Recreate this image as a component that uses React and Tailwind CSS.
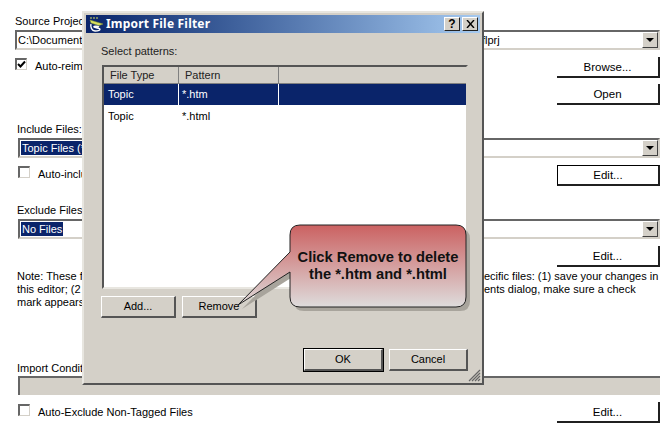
const font = "font-['Liberation_Sans',sans-serif]"

function PageButton({ label, focused }) {
  return (
    <div className={`w-[103px] h-[21px] pt-[2px] flex items-center justify-center bg-white text-[11.5px] text-black border-r-2 border-b-2 border-r-[#202020] border-b-[#202020] ${focused ? 'border-l border-t border-l-black border-t-black' : ''}`}>
      {label}
    </div>
  )
}

function Combo({ selected, left, right }) {
  return (
    <div className="h-[20px] flex items-center bg-white border-t-2 border-l-2 border-t-[#666] border-l-[#666] border-b-2 border-r-2 border-b-[#d4d0c8] border-r-[#d4d0c8]">
      <div className="flex-1 flex pl-[1px] leading-[14px]">
        {selected ? (
          <span className="bg-[#0a246a] text-white px-[1px] inline-block">{left}</span>
        ) : (
          <span className="w-[464px] shrink-0">{left}</span>
        )}
        {right && <span>{right}</span>}
      </div>
      <div className="w-[16px] h-[16px] bg-[#d4d0c8] flex items-center justify-center border-t border-l border-t-white border-l-white border-r border-b border-r-[#404040] border-b-[#404040]">
        <div className="w-0 h-0 border-l-[4px] border-r-[4px] border-t-[4px] border-l-transparent border-r-transparent border-t-black" />
      </div>
    </div>
  )
}

function Check({ checked }) {
  return (
    <div className="w-[12px] h-[12px] bg-white border-t-2 border-l-2 border-t-[#666] border-l-[#666] border-b border-r border-b-[#d4d0c8] border-r-[#d4d0c8] flex items-center justify-center">
      {checked && (
        <svg width="9" height="9" viewBox="0 0 9 9"><path d="M1 4l2.5 2.5L8 1.5" fill="none" stroke="#000" strokeWidth="2" /></svg>
      )}
    </div>
  )
}

function DlgButton({ label, wide, focused }) {
  return (
    <div className={`${wide ? 'w-[79px]' : 'w-[75px]'} h-[22px] flex items-center justify-center bg-[#d4d0c8] text-[11px] text-black border-t border-l border-t-white border-l-white border-r-2 border-b-2 border-r-[#555] border-b-[#555] ${focused ? 'outline outline-1 outline-black' : ''}`}>
      {label}
    </div>
  )
}

function Row({ cells, selected }) {
  return (
    <div className={`h-[21px] mb-[1px] flex items-center text-[11px] ${selected ? 'bg-[#0a246a] text-white' : 'text-black'}`}>
      <div className={`w-[75px] pl-[4px] h-full flex items-center ${selected ? 'border-r border-r-white' : ''}`}>{cells[0]}</div>
      <div className={`w-[100px] pl-[3px] h-full flex items-center ${selected ? 'border-r border-r-white' : ''}`}>{cells[1]}</div>
    </div>
  )
}

function Dialog() {
  return (
    <div className="absolute left-[82px] top-[11px] w-[402px] h-[374px] bg-[#d4d0c8] border-t-2 border-l-2 border-t-[#e8e6e0] border-l-[#e8e6e0] border-r-2 border-b-2 border-r-[#555] border-b-[#555] p-[2px] flex flex-col">
      {/* title bar */}
      <div className="h-[18px] flex items-center bg-gradient-to-r from-[#0a246a] to-[#a6caf0] pl-[2px] pr-[2px]">
        <svg width="17" height="17" viewBox="0 0 17 17" className="mr-[1px]">
          <path d="M3 1v2M6 1v2M9 1v2" stroke="#d8e060" strokeWidth="1" />
          <path d="M2 4l13 4-4 1.5L3 7z" fill="#d8e060" stroke="#8a9a30" strokeWidth="0.5" />
          <path d="M3 8c-1 3 1 7 4 7s5-1 5-2-5-1-6-2 4-1 5 0" fill="none" stroke="#fff" strokeWidth="1.4" />
        </svg>
        <span className="flex-1 text-white font-bold text-[12px] tracking-[0.2px] font-['Noto_Sans',sans-serif]">Import File Filter</span>
        <div className="w-[16px] h-[14px] mr-[2px] bg-[#d4d0c8] border-t border-l border-t-white border-l-white border-r border-b border-r-[#222] border-b-[#222] flex items-center justify-center text-[12px] font-bold leading-none text-black">?</div>
        <div className="w-[16px] h-[14px] bg-[#d4d0c8] border-t border-l border-t-white border-l-white border-r border-b border-r-[#222] border-b-[#222] flex items-center justify-center">
          <svg width="9" height="8" viewBox="0 0 9 8"><path d="M1 0l7 8M8 0L1 8" stroke="#000" strokeWidth="1.4" /></svg>
        </div>
      </div>

      <div className="flex-1 flex flex-col pl-[15px] pr-[12px] pt-[10px] pb-[10px]">
        <div className="text-[11px] text-[#222] leading-[16px] mb-[6px]">Select patterns:</div>
        <div className="h-[224px] ml-[1px] bg-white border-t-2 border-l-2 border-t-[#555] border-l-[#555] border-r-2 border-b-2 border-r-[#d4d0c8] border-b-[#e8e6e0]">
          <div className="h-[17px] flex bg-[#d4d0c8] text-[11px] border-b border-b-[#808080] text-[#222]">
            <div className="w-[75px] pl-[6px] pt-[1px] border-r border-r-[#808080] flex items-center">File Type</div>
            <div className="w-[100px] pl-[6px] pt-[1px] border-r border-r-[#808080] flex items-center">Pattern</div>
          </div>
          <Row cells={['Topic', '*.htm']} selected />
          <Row cells={['Topic', '*.html']} />
        </div>
        <div className="flex gap-[6px] mt-[7px]">
          <DlgButton label="Add..." />
          <DlgButton label="Remove" />
        </div>
        <div className="flex justify-end gap-[6px] mt-auto">
          <DlgButton label="OK" wide focused />
          <DlgButton label="Cancel" wide />
        </div>
      </div>

      <svg width="13" height="13" viewBox="0 0 13 13" className="absolute right-[1px] bottom-[1px]">
        <path d="M12 1L1 12M12 4L4 12M12 7L7 12M12 10L10 12" stroke="#666" strokeWidth="1.2" />
      </svg>
    </div>
  )
}

function Callout() {
  return (
    <>
      <svg width="244" height="92" viewBox="0 0 244 92" className="absolute left-[228px] top-[222px]">
        <defs>
          <linearGradient id="cg" x1="0" y1="0" x2="0" y2="1">
            <stop offset="0" stopColor="#cb6161" />
            <stop offset="1" stopColor="#dedcdc" />
          </linearGradient>
        </defs>
        <path d="M72 3H228Q238 3 238 13V75Q238 85 228 85H72Q62 85 62 75V50L10 83L62 30V13Q62 3 72 3Z" fill="#a8a49c" transform="translate(4,4)" />
        <path d="M72 3H228Q238 3 238 13V75Q238 85 228 85H72Q62 85 62 75V50L10 83L62 30V13Q62 3 72 3Z" fill="url(#cg)" stroke="#222" strokeWidth="1" />
      </svg>
      <div className="absolute left-[290px] top-[249px] w-[176px] text-center font-bold text-[14.7px] leading-[17px] text-[#111]">
        Click Remove to delete the *.htm and *.html
      </div>
    </>
  )
}

export default function App() {
  return (
    <div className={`relative w-[668px] h-[443px] bg-white overflow-hidden text-[11px] text-black ${font}`}>
      <div className="pl-[15px] pr-[8px] pt-[14px] flex flex-col">
        <div className="h-[16px] leading-[14px]">Source Project</div>
        <Combo left="C:\Documents" right="flprj" />
        <div className="flex justify-between mt-[7px]">
          <div className="flex items-start gap-[8px] pt-[1px]">
            <Check checked />
            <span>Auto-reim</span>
          </div>
          <PageButton label="Browse..." />
        </div>
        <div className="flex justify-end mt-[6px]"><PageButton label="Open" /></div>
      </div>

      <div className="pl-[18px] pr-[8px] mt-[17px] flex flex-col">
        <div className="h-[16px] leading-[14px] -ml-[1px]">Include Files:</div>
        <Combo selected left="Topic Files (*" />
        <div className="flex justify-between mt-[7px]">
          <div className="flex items-start gap-[8px] pt-[1px]">
            <Check />
            <span>Auto-inclu</span>
          </div>
          <PageButton label="Edit..." focused />
        </div>
        <div className="h-[16px] leading-[14px] -ml-[1px] mt-[17px]">Exclude Files:</div>
        <Combo selected left="No Files" />
        <div className="flex justify-end mt-[7px]"><PageButton label="Edit..." /></div>
      </div>

      <div className="pl-[17px] mt-[3px] leading-[13px] whitespace-nowrap">
        <div className="flex"><span className="w-[467px] shrink-0">Note: These f</span><span>ecific files: (1) save your changes in</span></div>
        <div className="flex"><span className="w-[467px] shrink-0">this editor; (2</span><span>ents dialog, make sure a check</span></div>
        <div>mark appears</div>
      </div>

      <div className="pl-[18px] pr-[8px] mt-[52px]">
        <div className="h-[15px] leading-[14px] -ml-[1px]">Import Condit</div>
        <div className="h-[19px] bg-[#d4d0c8] border-t-2 border-l-2 border-t-[#666] border-l-[#666]" />
        <div className="flex justify-between mt-[7px]">
          <div className="flex items-start gap-[8px] pt-[2px]">
            <Check />
            <span>Auto-Exclude Non-Tagged Files</span>
          </div>
          <PageButton label="Edit..." />
        </div>
      </div>

      <Dialog />
      <Callout />
    </div>
  )
}
